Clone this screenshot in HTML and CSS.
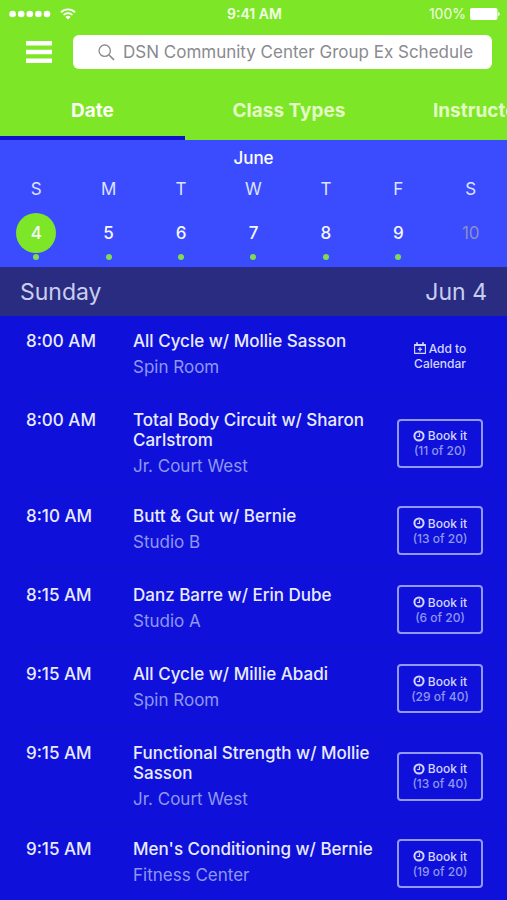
FILE: index.html
```html
<!DOCTYPE html>
<html lang="en">
<head>
<meta charset="utf-8">
<meta name="viewport" content="width=device-width, initial-scale=1">
<title>DSN Community Center Group Ex Schedule</title>
<link rel="stylesheet" href="styles.css">
</head>
<body>
<svg class="defs" aria-hidden="true">
  <symbol id="clock" viewBox="0 0 12 12">
    <circle cx="6" cy="6" r="4.6" fill="none" stroke="currentColor" stroke-width="2"/>
    <path d="M6.5 3.2V6.5H4.2" fill="none" stroke="currentColor" stroke-width="1.2"/>
  </symbol>
</svg>
<header class="top">
  <div class="status">
    <div class="signal">
      <svg width="42" height="8" viewBox="0 0 42 8" fill="#fff" aria-hidden="true"><circle cx="3.6" cy="4" r="3.3"/><circle cx="12.2" cy="4" r="3.3"/><circle cx="20.8" cy="4" r="3.3"/><circle cx="29.4" cy="4" r="3.3"/><circle cx="38" cy="4" r="3.3"/></svg>
      <svg width="16" height="12" viewBox="0 0 16 12" fill="none" stroke="#fff" stroke-width="1.8" aria-hidden="true"><path d="M1 4.4C4.8.4 11.2.4 15 4.4M3.6 7C6 4.5 10 4.5 12.4 7"/><path d="M8 11.5 5.4 8.900C6.900 7.500 9.100 7.500 10.600 8.900Z" fill="#fff" stroke="none"/></svg>
    </div>
    <div class="clock">9:41 AM</div>
    <div class="battery">
      <span>100%</span>
      <svg width="30" height="12" viewBox="0 0 30 12" fill="#fff" aria-hidden="true"><rect width="27.500" height="12" rx="2"/><path d="M28.200 4c2 .4 2 3.600 0 4z"/></svg>
    </div>
  </div>
  <div class="bar">
    <button class="menu" aria-label="Menu"><svg width="26" height="22" viewBox="0 0 26 22" fill="#fff"><path d="M0 0h26v4.500H0zM0 8.700h26v4.500H0zM0 17.400h26v4.500H0z"/></svg></button>
    <label class="search">
      <svg width="17" height="17" viewBox="0 0 17 17" fill="none" stroke="#8a8a8f" aria-label="Search"><circle cx="6.700" cy="6.700" r="5.700" stroke-width="1.300"/><path d="M11 11l5 4.800" stroke-width="1.700"/></svg>
      <input type="text" placeholder="DSN Community Center Group Ex Schedule">
    </label>
  </div>
  <nav class="tabs">
    <a class="tab tab-date active" href="#date">Date</a>
    <a class="tab tab-types" href="#types">Class Types</a>
    <a class="tab tab-instructors" href="#instructors">Instructors</a>
  </nav>
</header>
<section class="calendar">
  <h2 class="month">June</h2>
  <div class="week">
    <div class="day"><span class="name">S</span><button class="num selected">4</button><i class="dot"></i></div>
    <div class="day"><span class="name">M</span><button class="num">5</button><i class="dot"></i></div>
    <div class="day"><span class="name">T</span><button class="num">6</button><i class="dot"></i></div>
    <div class="day"><span class="name">W</span><button class="num">7</button><i class="dot"></i></div>
    <div class="day"><span class="name">T</span><button class="num">8</button><i class="dot"></i></div>
    <div class="day"><span class="name">F</span><button class="num">9</button><i class="dot"></i></div>
    <div class="day"><span class="name">S</span><button class="num" disabled>10</button></div>
  </div>
</section>
<main>
  <h1 class="heading"><span>Sunday</span><span>Jun 4</span></h1>
  <ul class="list">
    <li class="row">
      <time>8:00 AM</time>
      <div class="info"><h3>All Cycle w/ Mollie Sasson</h3><p>Spin Room</p></div>
      <button class="action plain"><span class="line"><svg width="12" height="12" viewBox="0 0 12 12" fill="none" stroke="currentColor" aria-hidden="true"><path d="M.6 2.500h10.800v8.900H.6z" stroke-width="1.100"/><path d="M.6 3.200h10.800" stroke-width="1.600"/><path d="M3 .2v2.600M9 .2v2.600" stroke-width="1.600"/><path d="M6 5.200v4.200M3.900 7.300h4.200" stroke-width="1.300"/></svg>Add to</span><span>Calendar</span></button>
    </li>
    <li class="row">
      <time>8:00 AM</time>
      <div class="info"><h3>Total Body Circuit w/ Sharon Carlstrom</h3><p>Jr. Court West</p></div>
      <button class="action"><span class="line"><svg width="12" height="12" aria-hidden="true"><use href="#clock"/></svg>Book it</span><span class="count">(11 of 20)</span></button>
    </li>
    <li class="row">
      <time>8:10 AM</time>
      <div class="info"><h3>Butt &amp; Gut w/ Bernie</h3><p>Studio B</p></div>
      <button class="action"><span class="line"><svg width="12" height="12" aria-hidden="true"><use href="#clock"/></svg>Book it</span><span class="count">(13 of 20)</span></button>
    </li>
    <li class="row">
      <time>8:15 AM</time>
      <div class="info"><h3>Danz Barre w/ Erin Dube</h3><p>Studio A</p></div>
      <button class="action"><span class="line"><svg width="12" height="12" aria-hidden="true"><use href="#clock"/></svg>Book it</span><span class="count">(6 of 20)</span></button>
    </li>
    <li class="row">
      <time>9:15 AM</time>
      <div class="info"><h3>All Cycle w/ Millie Abadi</h3><p>Spin Room</p></div>
      <button class="action"><span class="line"><svg width="12" height="12" aria-hidden="true"><use href="#clock"/></svg>Book it</span><span class="count">(29 of 40)</span></button>
    </li>
    <li class="row">
      <time>9:15 AM</time>
      <div class="info"><h3>Functional Strength w/ Mollie Sasson</h3><p>Jr. Court West</p></div>
      <button class="action"><span class="line"><svg width="12" height="12" aria-hidden="true"><use href="#clock"/></svg>Book it</span><span class="count">(13 of 40)</span></button>
    </li>
    <li class="row">
      <time>9:15 AM</time>
      <div class="info"><h3>Men's Conditioning w/ Bernie</h3><p>Fitness Center</p></div>
      <button class="action"><span class="line"><svg width="12" height="12" aria-hidden="true"><use href="#clock"/></svg>Book it</span><span class="count">(19 of 20)</span></button>
    </li>
  </ul>
</main>
</body>
</html>
```
FILE: styles.css
```css
* { box-sizing: border-box; margin: 0; padding: 0; }
body {
  background: #0f11db;
  color: #e9ebff;
  font-family: Inter, "Liberation Sans", sans-serif;
  font-size: 17px;
  line-height: 20px;
}
button { font: inherit; color: inherit; background: none; border: 0; cursor: pointer; }
svg { display: block; flex: none; }
.defs { display: none; }

.top { background: #7de626; }
.status {
  display: grid;
  grid-template-columns: 1fr auto 1fr;
  align-items: center;
  height: 27px;
  padding: 0 7px 0 9px;
  font-size: 14px;
  color: #f4ffe6;
}
.signal { display: flex; align-items: center; gap: 9px; }
.clock { font-weight: 600; }
.battery { display: flex; align-items: center; justify-content: flex-end; gap: 4px; }

.bar { display: flex; align-items: center; gap: 21px; padding: 8px 15px 0 26px; }
.menu { flex: none; }
.search {
  flex: 1;
  display: flex;
  align-items: center;
  gap: 8px;
  height: 34px;
  padding: 0 16px 0 25px;
  background: #fff;
  border-radius: 6px;
}
.search input {
  flex: 1;
  min-width: 0;
  border: 0;
  outline: 0;
  background: none;
  font: inherit;
  color: #555;
}
.search input::placeholder { color: #8a8a8f; opacity: 1; }

.tabs { display: flex; overflow: hidden; padding-top: 13px; }
.tab {
  flex: none;
  height: 58px;
  border-bottom: 4px solid transparent;
  text-align: center;
  line-height: 58px;
  font-size: 19px;
  font-weight: 700;
  color: #e3fbc4;
  text-decoration: none;
}
.tab.active { border-color: #1011cf; color: #fbfff2; }
.tab-date { width: 36.5%; }
.tab-types { width: 41%; }
.tab-instructors { padding: 0 40px; }

.calendar { background: #3b4cff; padding: 8px 0 7px; }
.month { text-align: center; font-size: 17px; font-weight: 500; color: #fff; }
.week { display: grid; grid-template-columns: repeat(7, 1fr); padding-top: 11px; }
.day { display: flex; flex-direction: column; align-items: center; }
.name { color: #dfe3ff; }
.num { width: 40px; height: 40px; margin-top: 14px; border-radius: 50%; font-weight: 500; color: #f5f6ff; }
.num.selected { background: #7de626; }
.num:disabled { color: #8a90c4; font-weight: 400; }
.dot { width: 6px; height: 6px; margin-top: 1px; border-radius: 50%; background: #7fdc50; }

.heading {
  display: flex;
  justify-content: space-between;
  height: 49px;
  padding: 0 20px;
  background: #292c80;
  font-size: 23px;
  font-weight: 400;
  line-height: 50px;
  color: #c9ceef;
}
.list { list-style: none; }
.row {
  display: grid;
  grid-template-columns: 107px 1fr 86px;
  margin-left: 26px;
  padding: 15px 24px 14px 0;
  border-bottom: 1px solid #1313cb;
}
time { font-weight: 500; }
.info h3 { margin-right: 16px; font-size: 17px; font-weight: 500; }
.info p { margin-top: 6px; color: #8f97f0; }
.action {
  align-self: center;
  display: flex;
  flex-direction: column;
  align-items: center;
  justify-content: center;
  height: 49px;
  border: 2px solid #9399f6;
  border-radius: 4px;
  font-size: 12px;
  font-weight: 500;
  line-height: 15px;
  color: #d3d6ff;
}
.action.plain { border-color: transparent; }
.line { display: flex; align-items: center; gap: 3px; }
.count { color: #8f97f0; }
```
